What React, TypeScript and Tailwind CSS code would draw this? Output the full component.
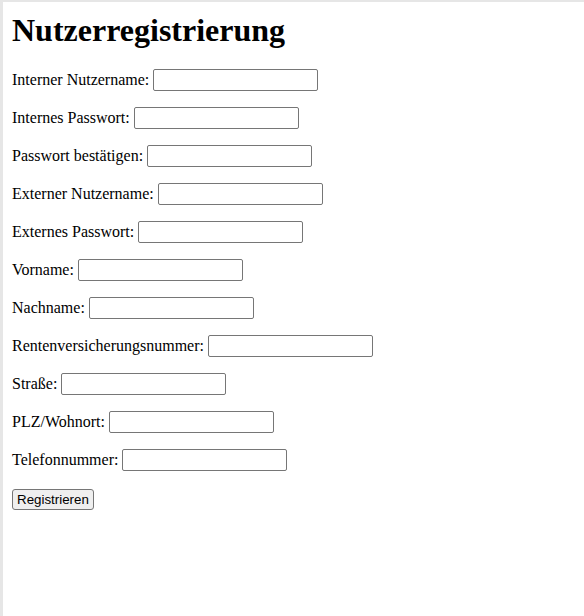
const FIELDS = [
  "Interner Nutzername:",
  "Internes Passwort:",
  "Passwort bestätigen:",
  "Externer Nutzername:",
  "Externes Passwort:",
  "Vorname:",
  "Nachname:",
  "Rentenversicherungsnummer:",
  "Straße:",
  "PLZ/Wohnort:",
  "Telefonnummer:",
];

export default function App() {
  return (
    <div className="min-h-[616px] w-[584px] bg-white border-t-2 border-l-[3px] border-[#e6e6e6] font-['Liberation_Serif',serif] text-black">
      <div className="pl-[9px] pt-[10px]">
        <h1 className="text-[32px] font-bold leading-[36px] mb-[21px]">
          Nutzerregistrierung
        </h1>

        <form onSubmit={(e) => e.preventDefault()}>
          {FIELDS.map((label, i) => (
            <div key={label} className="flex items-center h-[22px] mb-[16px] text-[16px]">
              <label htmlFor={`f${i}`}>{label}</label>
              <input
                id={`f${i}`}
                type={label.includes("Passwort") ? "password" : "text"}
                className="ml-[4px] w-[165px] h-[22px] border border-[#767676] rounded-[2px] bg-white px-[2px] text-[13px] outline-none"
              />
            </div>
          ))}

          <button
            type="submit"
            className="-mt-px h-[21px] px-[4px] border border-[#767676] rounded-[3px] bg-[#efefef] font-['Liberation_Sans',Arial,sans-serif] text-[13.33px] leading-none"
          >
            Registrieren
          </button>
        </form>
      </div>
    </div>
  );
}
